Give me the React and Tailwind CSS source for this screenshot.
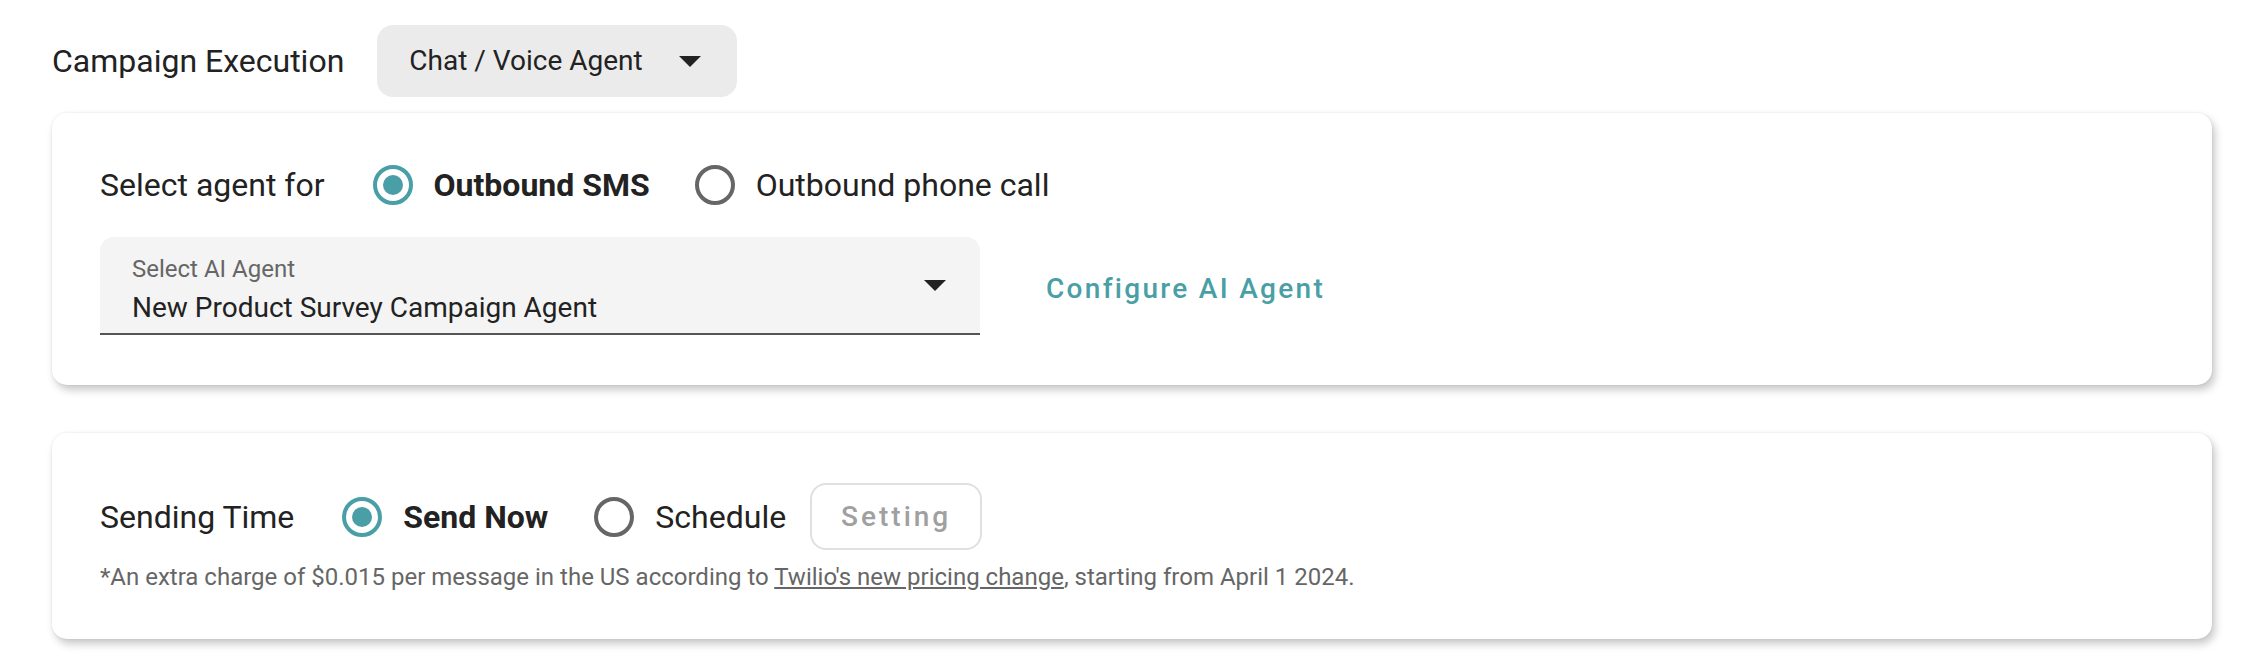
import React from "react";

const TEAL = "#4a9fa6";

function Radio({ checked }) {
  return checked ? (
    <div className="w-[40px] h-[40px] rounded-full border-[4px] border-[#4a9fa6] flex items-center justify-center shrink-0">
      <div className="w-[20px] h-[20px] rounded-full bg-[#4a9fa6]" />
    </div>
  ) : (
    <div className="w-[40px] h-[40px] rounded-full border-[4px] border-[#666666] shrink-0" />
  );
}

function Caret({ className }) {
  return (
    <svg className={className} width="22" height="11" viewBox="0 0 20 10">
      <path d="M0 0 L10 10 L20 0 Z" fill="#222222" />
    </svg>
  );
}

export default function App() {
  return (
    <div
      className="w-[2250px] h-[670px] bg-white pl-[52px] pr-[38px] pt-[25px] text-[#222222]"
      style={{ fontFamily: "Roboto, 'Noto Sans', sans-serif" }}
    >
      {/* Top row */}
      <div className="flex items-center h-[72px]">
        <span className="text-[32px] leading-[40px]">Campaign Execution</span>
        <div className="ml-[33px] w-[360px] h-[72px] rounded-[16px] bg-[#ebebeb] flex items-center pl-[32px] pr-[36px]">
          <span className="text-[28px] leading-[36px] flex-1">Chat / Voice Agent</span>
          <Caret />
        </div>
      </div>

      {/* Card 1 */}
      <div className="mt-[16px] bg-white rounded-[15px] shadow-[3px_5px_8px_rgba(0,0,0,0.22),0_0_3px_rgba(0,0,0,0.08)] pl-[48px] pt-[48px] pb-[50px]">
        <div className="flex items-center h-[48px]">
          <span className="text-[32px] leading-[40px]">Select agent for</span>
          <div className="ml-[48px]">
            <Radio checked />
          </div>
          <span className="ml-[21px] text-[32px] leading-[40px] font-bold">Outbound SMS</span>
          <div className="ml-[45px]">
            <Radio />
          </div>
          <span className="ml-[21px] text-[32px] leading-[40px]">Outbound phone call</span>
        </div>
        <div className="mt-[28px] flex items-center">
          <div className="w-[880px] h-[98px] bg-[#f4f4f4] rounded-t-[14px] border-b-[2px] border-[#555555] flex items-center pl-[32px] pr-[34px]">
            <div className="flex-1 flex flex-col pt-[10px]">
              <span className="text-[24px] leading-[28px] text-[#666666]">Select AI Agent</span>
              <span className="mt-[7px] text-[28px] leading-[36px]">New Product Survey Campaign Agent</span>
            </div>
            <Caret />
          </div>
          <span className="ml-[66px] mt-[6px] text-[28px] leading-[36px] font-medium tracking-[2.3px]" style={{ color: TEAL }}>
            Configure AI Agent
          </span>
        </div>
      </div>

      {/* Card 2 */}
      <div className="mt-[48px] bg-white rounded-[15px] shadow-[3px_5px_8px_rgba(0,0,0,0.22),0_0_3px_rgba(0,0,0,0.08)] pl-[48px] pt-[50px] pb-[46px]">
        <div className="flex items-center h-[67px]">
          <span className="text-[32px] leading-[40px]">Sending Time</span>
          <div className="ml-[48px]">
            <Radio checked />
          </div>
          <span className="ml-[21px] text-[32px] leading-[40px] font-bold">Send Now</span>
          <div className="ml-[46px]">
            <Radio />
          </div>
          <span className="ml-[21px] text-[32px] leading-[40px]">Schedule</span>
          <div className="ml-[24px] w-[172px] h-[67px] rounded-[16px] border-[2px] border-[#e0e0e0] flex items-center justify-center">
            <span className="text-[28px] leading-[36px] font-medium tracking-[3px] text-[#a0a0a0]">Setting</span>
          </div>
        </div>
        <div className="mt-[11px] text-[24px] leading-[32px] text-[#666666]">
          *An extra charge of $0.015 per message in the US according to{" "}
          <span className="underline">Twilio's new pricing change</span>, starting from April 1 2024.
        </div>
      </div>
    </div>
  );
}
